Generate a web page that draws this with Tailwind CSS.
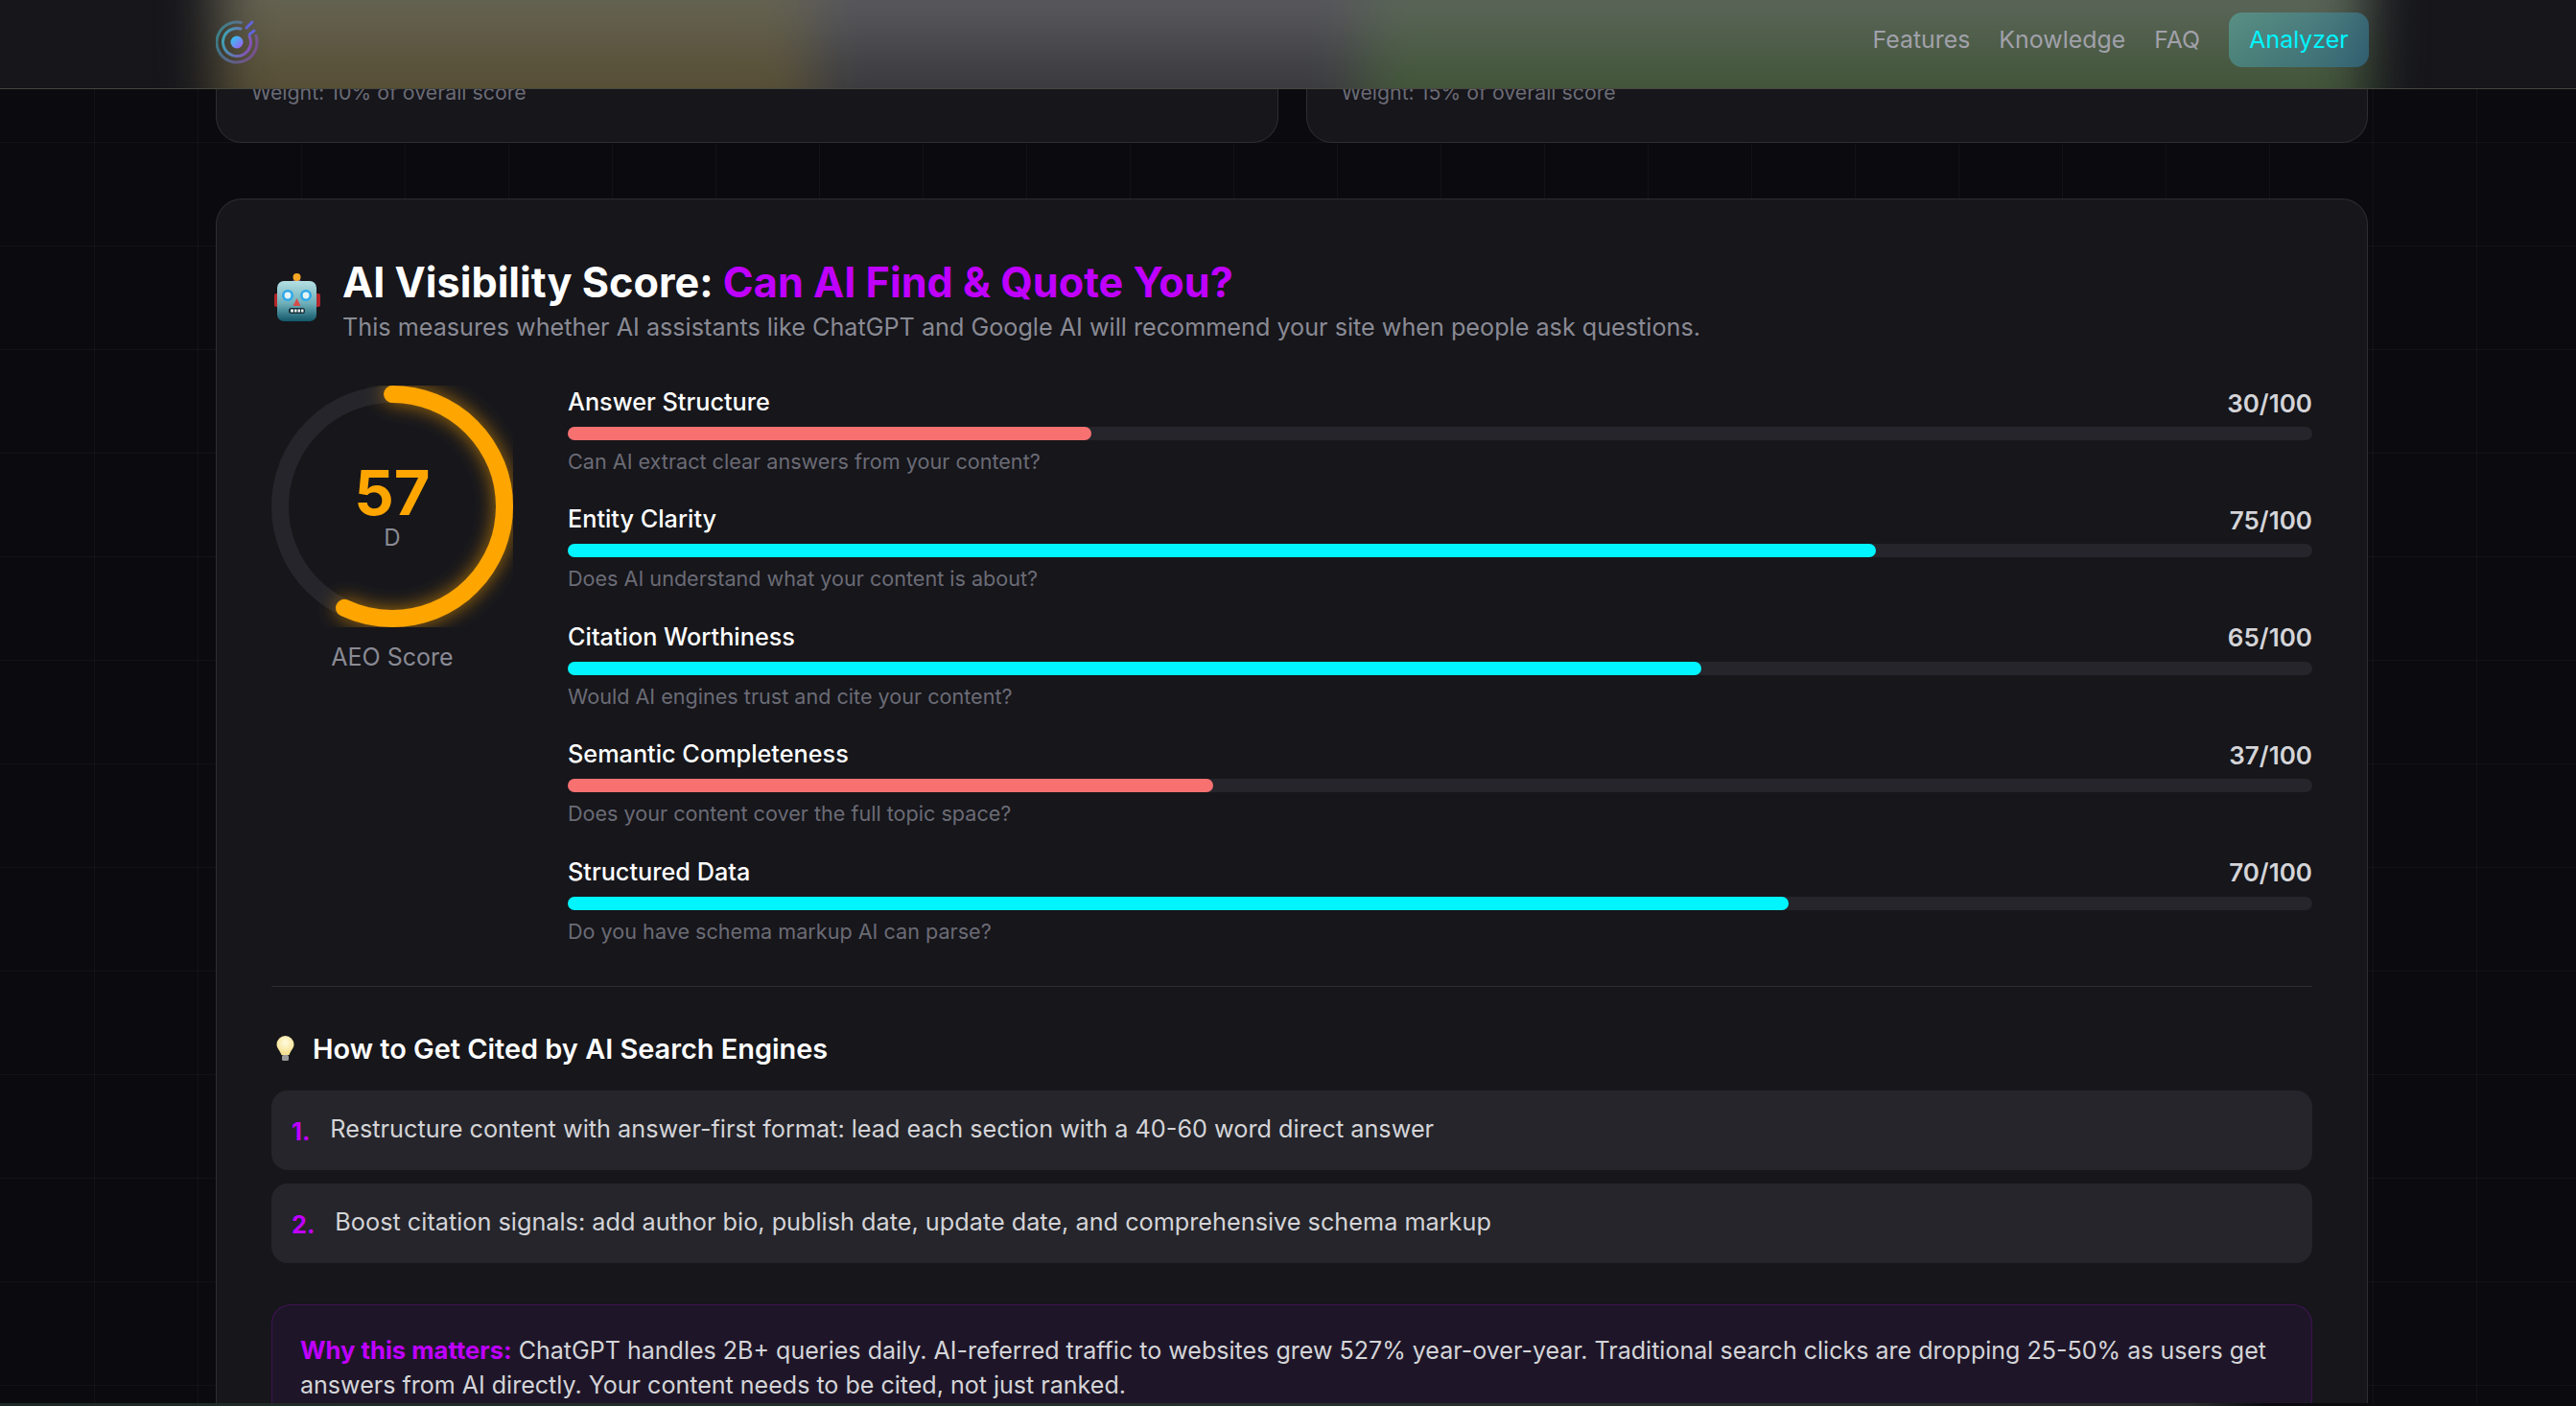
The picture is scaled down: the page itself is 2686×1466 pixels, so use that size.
<!DOCTYPE html>
<html lang="en">
<head>
    <meta charset="UTF-8">
    <title>AI Visibility Score</title>
    <script src="https://cdn.jsdelivr.net/npm/@tailwindcss/browser@4"></script>
</head>
<body class="relative h-[1466px] overflow-hidden bg-[#0a0a0f] bg-[linear-gradient(rgba(255,255,255,0.035)_1px,transparent_1px),linear-gradient(90deg,rgba(255,255,255,0.035)_1px,transparent_1px)] bg-[size:108px_108px] bg-[position:-10px_40px] font-['Inter','Noto_Sans',sans-serif] text-white">

    <header class="absolute inset-x-0 top-0 z-10 h-[93px] overflow-hidden border-b border-[#46463f] bg-[#16161b]">
        <div class="absolute inset-x-0 -inset-y-[60px] flex pl-[225px] pr-[217px] blur-[28px]">
            <div class="w-[622px] bg-[linear-gradient(#666454_30%,#564d33_70%)]"></div>
            <div class="w-[573px] bg-[linear-gradient(#5a5a5f_30%,#38383c_70%)]"></div>
            <div class="flex-1 bg-[linear-gradient(#5c665a_30%,#405437_70%)]"></div>
        </div>
        <div class="relative flex h-[83px] items-center justify-between pl-[225px] pr-[216px]">
            <svg class="h-[54px] w-[50px]" viewBox="0 0 50 54" fill="none">
                <defs>
                    <linearGradient id="logoRing" x1="0" y1="0" x2="1" y2="1">
                        <stop offset="0" stop-color="#2dd4d8"/>
                        <stop offset="1" stop-color="#a83be0"/>
                    </linearGradient>
                    <linearGradient id="logoDot" x1="0" y1="0" x2="1" y2="1">
                        <stop offset="0" stop-color="#22d3ee"/>
                        <stop offset="1" stop-color="#a855f7"/>
                    </linearGradient>
                </defs>
                <circle cx="22" cy="29" r="21" stroke="url(#logoRing)" stroke-width="3" opacity="0.5" stroke-dasharray="112 20" transform="rotate(-22 22 29)"/>
                <circle cx="22" cy="29" r="14.500" stroke="url(#logoRing)" stroke-width="3" opacity="0.75" stroke-dasharray="80 11" transform="rotate(-28 22 29)"/>
                <circle cx="22" cy="29" r="6.500" fill="url(#logoDot)"/>
                <path d="M32 14l6-6M35 21l5-4" stroke="#6366f1" stroke-width="3" stroke-linecap="round" opacity="0.85"/>
            </svg>
            <nav class="flex items-center gap-[30px] text-[24.9px] text-[#a1a1aa]">
                <a>Features</a>
                <a>Knowledge</a>
                <a>FAQ</a>
                <a class="flex h-[57px] w-[146px] items-center justify-center rounded-[14px] bg-[linear-gradient(135deg,rgba(90,180,170,0.55),rgba(50,110,140,0.7))] text-[#00f5ff]">Analyzer</a>
            </nav>
        </div>
    </header>

    <main class="pr-[217px] pl-[225px]">
        <!-- previous row of cards, mostly under the nav -->
        <div class="grid h-[149px] grid-cols-2 gap-[29px]">
            <div class="rounded-b-[27px] border border-t-0 border-white/10 bg-[#16161b] px-[36px] pt-[81px] text-[21.3px] text-[#6b6b75]">Weight: 10% of overall score</div>
            <div class="rounded-b-[27px] border border-t-0 border-white/10 bg-[#16161b] px-[36px] pt-[81px] text-[21.3px] text-[#6b6b75]">Weight: 15% of overall score</div>
        </div>

        <section class="mt-[58px] h-[1300px] rounded-[27px] border border-white/10 bg-[#16161b] px-[57px] pt-[60px]">
            <div class="flex items-start gap-[23px] pl-[3px]">
                <svg class="mt-[17px] h-[51px] w-[48px] shrink-0" viewBox="0 0 48 51">
                    <defs>
                        <linearGradient id="robotHead" x1="0" y1="0" x2="0" y2="1">
                            <stop offset="0" stop-color="#b4dfe3"/>
                            <stop offset="0.55" stop-color="#6fb0ba"/>
                            <stop offset="1" stop-color="#12586a"/>
                        </linearGradient>
                    </defs>
                    <rect x="0" y="21" width="6" height="14" rx="2" fill="#b3262a"/>
                    <rect x="42" y="21" width="6" height="14" rx="2" fill="#b3262a"/>
                    <path d="M17 10a7 5 0 0 1 13 0z" fill="#7a4fa3"/>
                    <circle cx="23.500" cy="4" r="4" fill="#f9a825"/>
                    <rect x="3" y="8" width="41" height="42" rx="7" fill="url(#robotHead)"/>
                    <circle cx="14" cy="23" r="6" fill="#2fa8e8"/>
                    <circle cx="14" cy="23" r="3.400" fill="#e4f4f6"/>
                    <circle cx="33" cy="23" r="6" fill="#2fa8e8"/>
                    <circle cx="33" cy="23" r="3.400" fill="#e4f4f6"/>
                    <path d="M23.500 26l4 8h-8z" fill="#d84a4a"/>
                    <rect x="15" y="36" width="17" height="6" rx="2.500" fill="#16303a"/>
                    <path d="M17 37.500h3v3h-3zM21 37.500h2.500v3H21zM24.500 37.500H27v3h-2.500zM28 37.500h2.500v3H28z" fill="#e8eef0"/>
                </svg>
                <div>
                    <h2 class="text-[43.2px] leading-[52px] font-bold">AI Visibility Score: <span class="text-[#bf00ff]">Can AI Find &amp; Quote You?</span></h2>
                    <p class="mt-[1px] text-[25.2px] leading-[40px] text-[#8a8a94]">This measures whether AI assistants like ChatGPT and Google AI will recommend your site when people ask questions.</p>
                </div>
            </div>

            <div class="mt-[41px] flex gap-[57px]">
                <div class="flex w-[252px] shrink-0 flex-col items-center">
                    <div class="relative h-[252px] w-[252px]">
                        <svg class="h-full w-full -rotate-90 overflow-hidden" viewBox="0 0 252 252" fill="none">
                            <circle cx="126" cy="126" r="117" stroke="#25252b" stroke-width="18"/>
                            <circle class="drop-shadow-[0_0_10px_rgba(255,165,0,0.65)]" cx="126" cy="126" r="117" stroke="#ffa500" stroke-width="18" stroke-linecap="round" stroke-dasharray="419 735"/>
                        </svg>
                        <div class="absolute inset-0 flex flex-col items-center justify-center">
                            <span class="text-[65px] leading-[66px] font-bold text-[#ffa500]">57</span>
                            <span class="text-[24px] leading-[28px] text-[#8a8a94]">D</span>
                        </div>
                    </div>
                    <span class="mt-[15px] text-[25px] leading-[32px] text-[#8a8a94]">AEO Score</span>
                </div>

                <div class="flex flex-1 flex-col gap-[26.4px]">
                    <div>
                        <div class="flex h-[36px] items-center justify-between text-[25.25px] font-medium"><span>Answer Structure</span><span class="text-[26px] font-semibold text-[#d4d4d8]">30/100</span></div>
                        <div class="mt-[7px] h-[14px] rounded-full bg-[#25252b]"><div class="h-full w-[30%] rounded-full bg-[#f87171]"></div></div>
                        <p class="mt-[5px] h-[34px] text-[21.6px] leading-[34px] text-[#6b6b75]">Can AI extract clear answers from your content?</p>
                    </div>
                    <div>
                        <div class="flex h-[36px] items-center justify-between text-[25.25px] font-medium"><span>Entity Clarity</span><span class="text-[26px] font-semibold text-[#d4d4d8]">75/100</span></div>
                        <div class="mt-[7px] h-[14px] rounded-full bg-[#25252b]"><div class="h-full w-[75%] rounded-full bg-[#00f5ff]"></div></div>
                        <p class="mt-[5px] h-[34px] text-[21.6px] leading-[34px] text-[#6b6b75]">Does AI understand what your content is about?</p>
                    </div>
                    <div>
                        <div class="flex h-[36px] items-center justify-between text-[25.25px] font-medium"><span>Citation Worthiness</span><span class="text-[26px] font-semibold text-[#d4d4d8]">65/100</span></div>
                        <div class="mt-[7px] h-[14px] rounded-full bg-[#25252b]"><div class="h-full w-[65%] rounded-full bg-[#00f5ff]"></div></div>
                        <p class="mt-[5px] h-[34px] text-[21.6px] leading-[34px] text-[#6b6b75]">Would AI engines trust and cite your content?</p>
                    </div>
                    <div>
                        <div class="flex h-[36px] items-center justify-between text-[25.25px] font-medium"><span>Semantic Completeness</span><span class="text-[26px] font-semibold text-[#d4d4d8]">37/100</span></div>
                        <div class="mt-[7px] h-[14px] rounded-full bg-[#25252b]"><div class="h-full w-[37%] rounded-full bg-[#f87171]"></div></div>
                        <p class="mt-[5px] h-[34px] text-[21.6px] leading-[34px] text-[#6b6b75]">Does your content cover the full topic space?</p>
                    </div>
                    <div>
                        <div class="flex h-[36px] items-center justify-between text-[25.25px] font-medium"><span>Structured Data</span><span class="text-[26px] font-semibold text-[#d4d4d8]">70/100</span></div>
                        <div class="mt-[7px] h-[14px] rounded-full bg-[#25252b]"><div class="h-full w-[70%] rounded-full bg-[#00f5ff]"></div></div>
                        <p class="mt-[5px] h-[34px] text-[21.6px] leading-[34px] text-[#6b6b75]">Do you have schema markup AI can parse?</p>
                    </div>
                </div>
            </div>

            <div class="mt-[40px] border-t border-white/10 pt-[45px]">
                <div class="flex h-[40px] items-center gap-[19px]">
                    <svg class="ml-[5px] h-[27px] w-[19px]" viewBox="0 0 19 27">
                        <defs>
                            <radialGradient id="bulbGlass" cx="0.5" cy="0.35" r="0.6">
                                <stop offset="0" stop-color="#fffbe0"/>
                                <stop offset="1" stop-color="#f7e08f"/>
                            </radialGradient>
                        </defs>
                        <path d="M9.500 0a9 9 0 0 1 9 9c0 4-3.500 6.500-5 11h-8c-1.500-4.500-5-7-5-11a9 9 0 0 1 9-9z" fill="url(#bulbGlass)"/>
                        <rect x="6" y="20" width="7" height="6" rx="1.500" fill="#9a9a9a"/>
                    </svg>
                    <h3 class="text-[28.9px] font-semibold">How to Get Cited by AI Search Engines</h3>
                </div>
                <ol class="mt-[23px] flex flex-col gap-[14px] text-[25.25px] text-[#d4d4d8]">
                    <li class="flex h-[83px] items-center gap-[21px] rounded-[17px] bg-[#25252b] pl-[21px]"><span class="mt-[6px] font-bold text-[#bf00ff]">1.</span><span>Restructure content with answer-first format: lead each section with a 40-60 word direct answer</span></li>
                    <li class="flex h-[83px] items-center gap-[21px] rounded-[17px] bg-[#25252b] pl-[21px]"><span class="mt-[6px] font-bold text-[#bf00ff]">2.</span><span>Boost citation signals: add author bio, publish date, update date, and comprehensive schema markup</span></li>
                </ol>
                <div class="mt-[43px] rounded-[20px] border border-[#bf00ff]/20 bg-[#1e1628] pt-[29px] pr-[30px] pb-[30px] pl-[29px] text-[25.05px] leading-[36.6px] text-[#d4d4d8]">
                    <strong class="text-[25.6px] font-bold text-[#bf00ff]">Why this matters:</strong> ChatGPT handles 2B+ queries daily. AI-referred traffic to websites grew 527% year-over-year. Traditional search clicks are dropping 25-50% as users get answers from AI directly. Your content needs to be cited, not just ranked.
                </div>
            </div>
        </section>
    </main>

    <!-- thin lighter row along the bottom edge of the capture -->
    <div class="absolute inset-x-0 bottom-0 h-[3px] bg-[linear-gradient(90deg,#1f2a28,#26302c_50%,#2a2d2c_85%,#0a0a0f_88%)]"></div>
</body>
</html>
